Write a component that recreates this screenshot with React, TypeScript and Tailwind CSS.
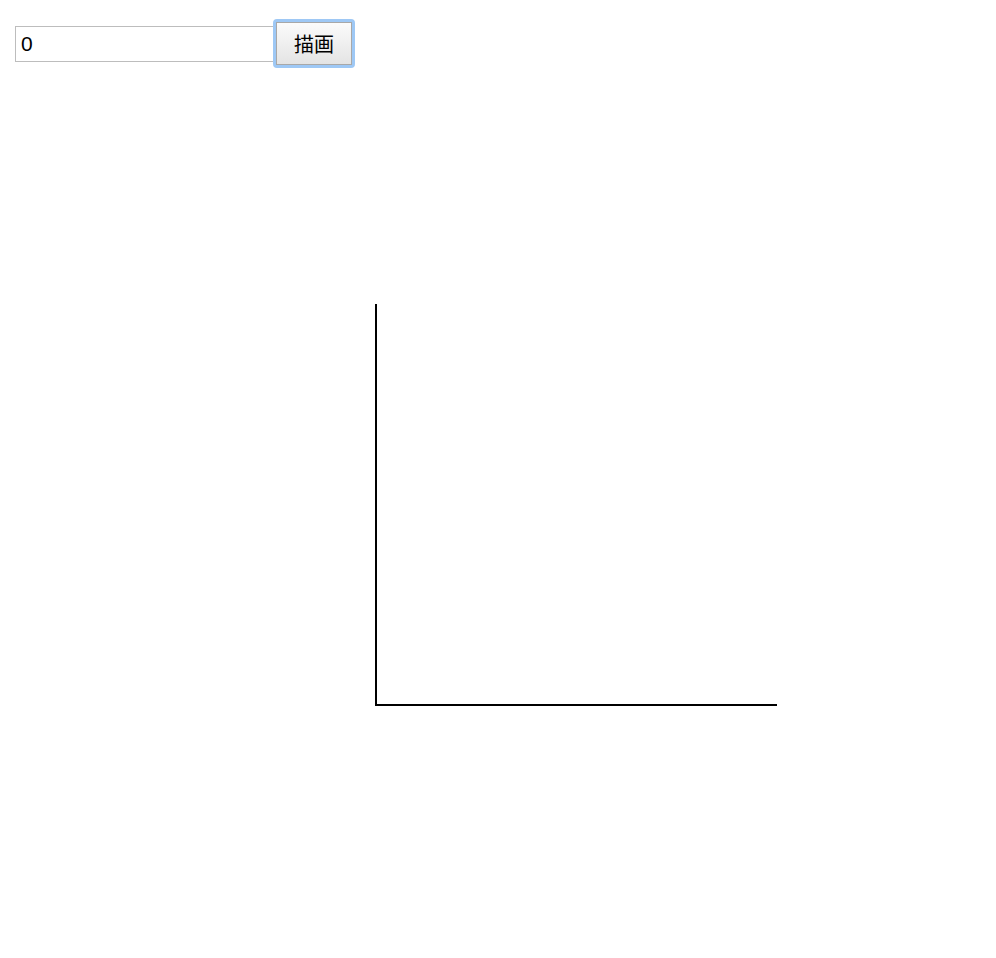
import { useState } from 'react';

function App() {
  const [value, setValue] = useState('0');

  return (
    <div className="min-h-[958px] w-full bg-white font-['Liberation_Sans','Noto_Sans_CJK_JP',sans-serif]">
      {/* Controls */}
      <div className="flex items-center pt-[19px] pl-[15px]">
        <input
          value={value}
          onChange={e => setValue(e.target.value)}
          className="w-[260px] h-[36px] border border-[#bdbdbd] px-[5px] text-[21px] leading-none text-black outline-none font-['Liberation_Sans',sans-serif]"
        />
        <button className="h-[49px] w-[82px] -ml-[2px] rounded-[4px] border-[3px] border-[#9ec8f5] p-0">
          <span className="flex h-full w-full items-center justify-center border border-[#a8a8a8] bg-gradient-to-b from-[#fbfbfb] to-[#e4e4e4] text-[20px] text-black font-['Noto_Sans_CJK_JP',sans-serif]">
            描画
          </span>
        </button>
      </div>

      {/* Axes */}
      <svg width="420" height="420" className="ml-[360px] mt-[225px] block">
        <line x1="16" y1="11" x2="16" y2="413" stroke="#000" strokeWidth="2" />
        <line x1="15" y1="412" x2="417" y2="412" stroke="#000" strokeWidth="2" />
      </svg>
    </div>
  );
}

export default App;
